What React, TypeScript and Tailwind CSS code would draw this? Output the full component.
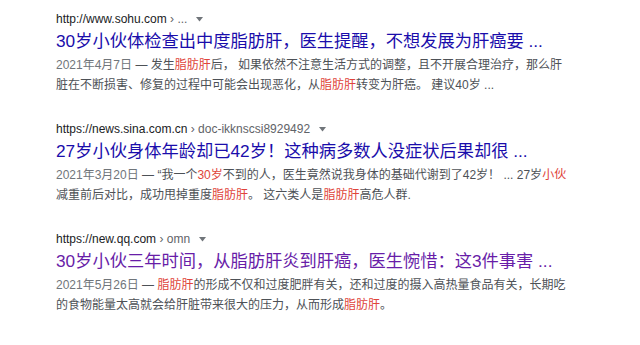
import React from 'react'

type Part = string | { hl: string }

interface ResultData {
  site: string
  crumb: string
  title: string
  visited?: boolean
  date: string
  lines: Part[][]
}

const RESULTS: ResultData[] = [
  {
    site: 'http://www.sohu.com',
    crumb: '...',
    title: '30岁小伙体检查出中度脂肪肝，医生提醒，不想发展为肝癌要 ...',
    date: '2021年4月7日',
    lines: [
      [' — 发生', { hl: '脂肪肝' }, '后， 如果依然不注意生活方式的调整，且不开展合理治疗，那么肝'],
      ['脏在不断损害、修复的过程中可能会出现恶化，从', { hl: '脂肪肝' }, '转变为肝癌。 建议40岁 ...'],
    ],
  },
  {
    site: 'https://news.sina.com.cn',
    crumb: 'doc-ikknscsi8929492',
    title: '27岁小伙身体年龄却已42岁！这种病多数人没症状后果却很 ...',
    date: '2021年3月20日',
    lines: [
      [' — “我一个', { hl: '30岁' }, '不到的人，医生竟然说我身体的基础代谢到了42岁！ ... 27岁', { hl: '小伙' }],
      ['减重前后对比，成功甩掉重度', { hl: '脂肪肝' }, '。 这六类人是', { hl: '脂肪肝' }, '高危人群.'],
    ],
  },
  {
    site: 'https://new.qq.com',
    crumb: 'omn',
    title: '30岁小伙三年时间，从脂肪肝炎到肝癌，医生惋惜：这3件事害 ...',
    visited: true,
    date: '2021年5月26日',
    lines: [
      [' — ', { hl: '脂肪肝' }, '的形成不仅和过度肥胖有关，还和过度的摄入高热量食品有关，长期吃'],
      ['的食物能量太高就会给肝脏带来很大的压力，从而形成', { hl: '脂肪肝' }, '。'],
    ],
  },
]

function Caret() {
  return (
    <svg width="7" height="5" viewBox="0 0 7 5" className="ml-[9px] mt-[1px] fill-[#70757a]">
      <path d="M0 0h7L3.5 4.5z" />
    </svg>
  )
}

function Result({ r }: { r: ResultData }) {
  return (
    <div className="flex flex-col">
      <div className="flex items-center h-[20px] text-[12px] leading-[20px] whitespace-nowrap">
        <span className="text-[#202124]">{r.site}</span>
        <span className="text-[#5f6368]">&nbsp;› {r.crumb}</span>
        <Caret />
      </div>
      <div
        className={
          'h-[24px] text-[17.25px] leading-[24px] whitespace-nowrap ' +
          (r.visited ? 'text-[#681da8]' : 'text-[#1a0dab]')
        }
      >
        {r.title}
      </div>
      <div className="mt-[2px] text-[12px] leading-[20px] text-[#4d5156] whitespace-nowrap">
        {r.lines.map((line, i) => (
          <div key={i}>
            {i === 0 && <span className="text-[#70757a]">{r.date}</span>}
            {line.map((p, j) =>
              typeof p === 'string' ? (
                <span key={j}>{p}</span>
              ) : (
                <span key={j} className="text-[#e0443a]">
                  {p.hl}
                </span>
              ),
            )}
          </div>
        ))}
      </div>
    </div>
  )
}

export default function App() {
  return (
    <div
      className="w-[640px] h-[345px] overflow-hidden bg-white pl-[56px] pt-[9px] flex flex-col gap-[24px]"
      style={{ fontFamily: '"Liberation Sans", Arial, "Noto Sans CJK SC", sans-serif' }}
    >
      {RESULTS.map((r) => (
        <Result key={r.site} r={r} />
      ))}
    </div>
  )
}
